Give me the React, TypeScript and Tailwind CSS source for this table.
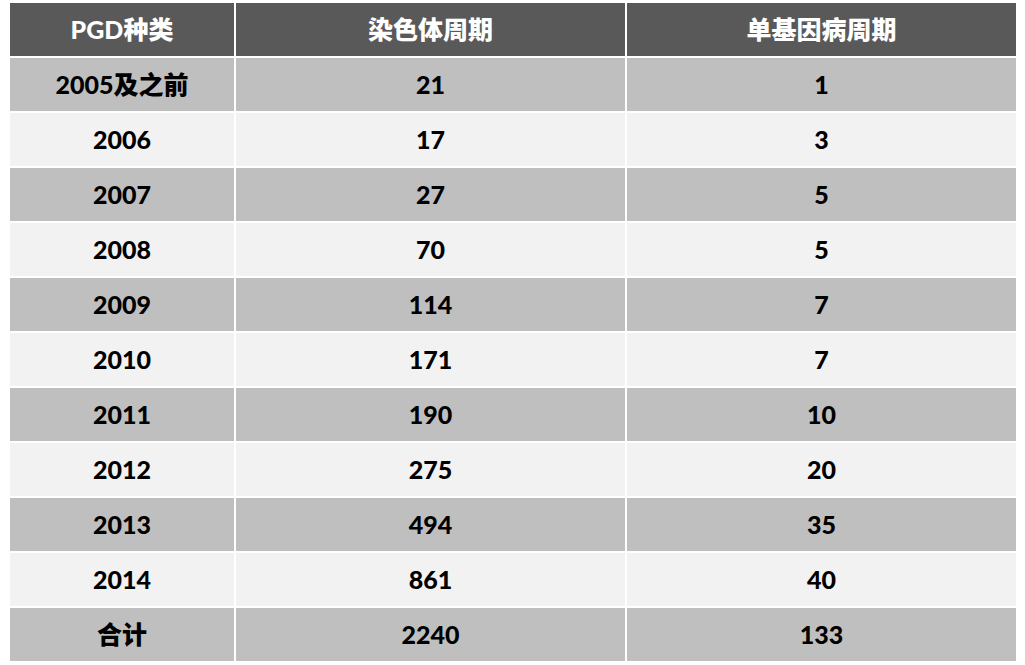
import React from 'react';

interface Row {
    label: string;
    chromosome: string;
    monogenic: string;
}

const rows: Row[] = [
    { label: '2005及之前', chromosome: '21', monogenic: '1' },
    { label: '2006', chromosome: '17', monogenic: '3' },
    { label: '2007', chromosome: '27', monogenic: '5' },
    { label: '2008', chromosome: '70', monogenic: '5' },
    { label: '2009', chromosome: '114', monogenic: '7' },
    { label: '2010', chromosome: '171', monogenic: '7' },
    { label: '2011', chromosome: '190', monogenic: '10' },
    { label: '2012', chromosome: '275', monogenic: '20' },
    { label: '2013', chromosome: '494', monogenic: '35' },
    { label: '2014', chromosome: '861', monogenic: '40' },
    { label: '合计', chromosome: '2240', monogenic: '133' },
];

const cell = 'flex items-center justify-center h-[53px]';

export default function App() {
    return (
        <div
            className="w-[1025px] h-[665px] bg-white pl-[10px] pt-[3px]"
            style={{ fontFamily: 'Lato, "Noto Sans CJK SC", sans-serif' }}
        >
            <div className="grid grid-cols-[224px_389px_389px] gap-[2px] w-[1006px] font-black text-[25px] leading-none">
                {/* Header */}
                <div className={`${cell} bg-[#595959] text-white`}>PGD种类</div>
                <div className={`${cell} bg-[#595959] text-white`}>染色体周期</div>
                <div className={`${cell} bg-[#595959] text-white`}>单基因病周期</div>

                {rows.map((r, i) => {
                    const bg = i % 2 === 0 ? 'bg-[#bfbfbf]' : 'bg-[#f2f2f2]';
                    return (
                        <React.Fragment key={r.label}>
                            <div className={`${cell} ${bg} text-black`}>{r.label}</div>
                            <div className={`${cell} ${bg} text-black`}>{r.chromosome}</div>
                            <div className={`${cell} ${bg} text-black`}>{r.monogenic}</div>
                        </React.Fragment>
                    );
                })}
            </div>
        </div>
    );
}
